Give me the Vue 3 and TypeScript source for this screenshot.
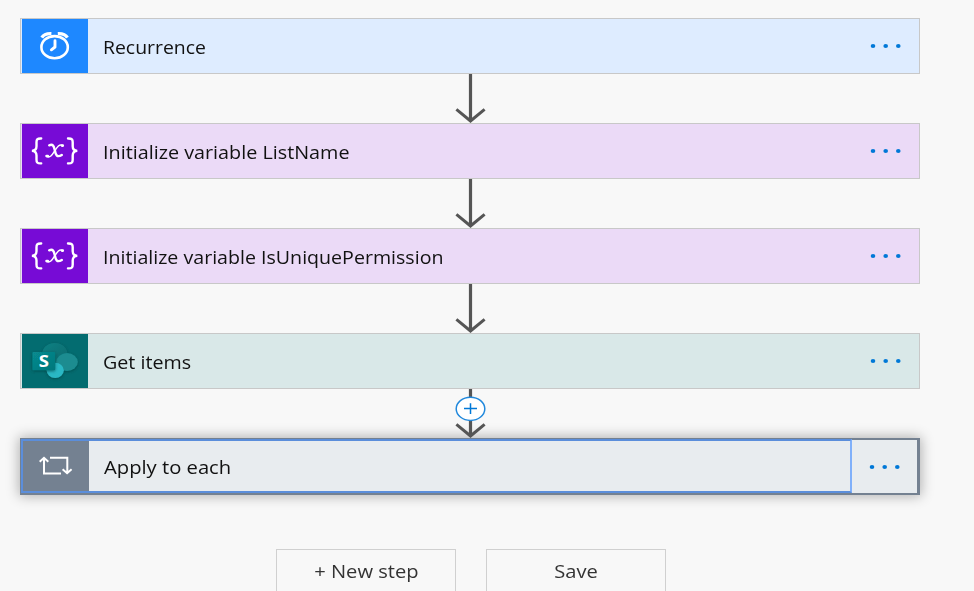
<script setup lang="ts">
type Kind = 'clock' | 'variable' | 'sharepoint' | 'loop'

interface Step {
  label: string
  kind: Kind
  stretch: number
}

const steps: Step[] = [
  { label: 'Recurrence', kind: 'clock', stretch: 1.108 },
  { label: 'Initialize variable ListName', kind: 'variable', stretch: 1.13 },
  { label: 'Initialize variable IsUniquePermission', kind: 'variable', stretch: 1.12 },
  { label: 'Get items', kind: 'sharepoint', stretch: 1.125 },
  { label: 'Apply to each', kind: 'loop', stretch: 1.154 },
]
</script>

<template>
  <main class="designer">
    <div class="flow">
      <template v-for="(step, i) in steps" :key="step.label">
        <section class="card" :class="step.kind">
          <div class="head">
            <div class="tile">
              <svg v-if="step.kind === 'clock'" class="icon" viewBox="0 0 66 54" fill="none" stroke="#fff">
                <ellipse cx="32.6" cy="28.2" rx="13.2" ry="11.1" stroke-width="2.6" />
                <path d="M33 21.8V28L29.4 30.8" stroke-width="2.9" stroke-linecap="round" stroke-linejoin="round" />
                <path d="M19.8 18.6C21.3 16 24.8 14.4 29.4 14.6M45.4 18.6C43.9 16 40.4 14.4 35.8 14.6" stroke-width="3.3" />
              </svg>
              <svg v-else-if="step.kind === 'variable'" class="icon" viewBox="0 0 66 54" fill="none" stroke="#fff" stroke-linecap="round">
                <path d="M19.2 14.5C14.9 14.3 14.5 15.9 14.5 18.2V22.3C14.5 25.1 13.5 26.7 9.9 26.9C13.5 27.1 14.5 28.7 14.5 31.5V35.5C14.5 38 14.9 39.6 19.2 39.4" stroke-width="2.4" />
                <path d="M46 14.5C50.2 14.3 50.7 15.9 50.7 18.2V22.3C50.7 25.1 51.7 26.7 55.3 26.9C51.7 27.1 50.7 28.7 50.7 31.5V35.5C50.7 38 50.2 39.6 46 39.4" stroke-width="2.4" />
                <path d="M27.2 21.3C31 19.7 31.9 22.2 32.7 25.7C33.6 30.5 34.7 34.2 39.8 30.9" stroke-width="2.4" />
                <path d="M41 21.7C37.5 19.3 35 23.2 32.7 26.9C30.2 31.1 27.7 34.6 24.4 32" stroke-width="1.5" />
                <path d="M40 21.6H40.8M24.6 32.1H25.8" stroke-width="2.6" />
              </svg>
              <svg v-else-if="step.kind === 'sharepoint'" class="icon" viewBox="0 0 66 54">
                <defs>
                  <filter id="soft" x="-20%" y="-20%" width="140%" height="150%">
                    <feDropShadow dx="0" dy="1" stdDeviation="1.6" flood-color="#003c40" flood-opacity=".65" />
                  </filter>
                  <linearGradient id="plate" x2="1" y2="1">
                    <stop stop-color="#078b90" />
                    <stop offset="1" stop-color="#04777b" />
                  </linearGradient>
                  <linearGradient id="dome" x2="0.8" y2="1">
                    <stop stop-color="#128184" />
                    <stop offset="1" stop-color="#056a6d" />
                  </linearGradient>
                </defs>
                <g filter="url(#soft)">
                  <ellipse cx="32.8" cy="19.6" rx="12.6" ry="10.6" fill="url(#dome)" />
                  <ellipse cx="45" cy="28" rx="10.8" ry="9" fill="#1b8c90" />
                  <ellipse cx="33.2" cy="36.3" rx="8.6" ry="7.6" fill="#2bb8c4" />
                </g>
                <rect x="10.4" y="18" width="22.8" height="18.2" rx="1" fill="url(#plate)" filter="url(#soft)" />
                <text x="18.2" y="32.6" text-anchor="middle" class="letter">S</text>
              </svg>
              <svg v-else class="icon" viewBox="0 0 66 54" fill="none" stroke="#fff" stroke-width="2">
                <path d="M21 19V34.4H38M16.7 22.7L21 18.8L25.3 22.7M27 18.8H44.3V34M39.6 30.3L44.1 34.2L48.6 30.3" />
              </svg>
            </div>
            <div class="title">
              <span class="text" :style="{ '--stretch': step.stretch }">{{ step.label }}</span>
            </div>
          </div>
          <div class="more">
            <svg width="32" height="6" viewBox="0 0 32 6" fill="#0078d7">
              <ellipse cx="3" cy="3" rx="2.3" ry="1.9" />
              <ellipse cx="15.7" cy="3" rx="2.3" ry="1.9" />
              <ellipse cx="28.3" cy="3" rx="2.3" ry="1.9" />
            </svg>
          </div>
        </section>
        <div v-if="i < steps.length - 1" class="connector">
          <svg width="34" height="49" viewBox="0 0 34 49" fill="none">
            <path d="M17.5 0V47" stroke="#555" stroke-width="3.2" />
            <path d="M3.4 35.4L17.5 47L31.6 35.4" stroke="#555" stroke-width="3" />
            <template v-if="i === 3">
              <ellipse cx="17.5" cy="19.8" rx="14.3" ry="11.6" fill="#fff" stroke="#2088dc" stroke-width="1.5" />
              <path d="M11 19.6H24M17.5 14.3V25" stroke="#0078d7" stroke-width="1.5" />
            </template>
          </svg>
        </div>
      </template>
    </div>
    <div class="actions">
      <button class="action" type="button"><span class="text new">+ New step</span></button>
      <button class="action" type="button"><span class="text save">Save</span></button>
    </div>
  </main>
</template>

<style>
body {
  background: #f8f8f8;
  overflow: hidden;
}
</style>

<style scoped>
.designer {
  box-sizing: border-box;
  height: 591px;
  padding: 18px 0 0 20px;
  overflow: hidden;
  background: #f8f8f8;
  color: #111;
  font: 17.5px/24px "Open Sans", "Noto Sans", sans-serif;
}
.flow {
  width: 900px;
}
.card {
  box-sizing: border-box;
  display: flex;
  height: 56px;
  border: 1px solid #c8c8c8;
}
.head {
  flex: 1;
  display: flex;
}
.tile {
  width: 66px;
  margin-left: 1px;
  flex: none;
}
.icon {
  display: block;
  width: 66px;
  height: 54px;
}
.title {
  flex: 1;
  display: flex;
  align-items: center;
  padding: 1px 0 0 15px;
}
.text {
  display: inline-block;
  white-space: nowrap;
  transform: scaleX(var(--stretch));
  transform-origin: left center;
}
.more {
  display: flex;
  align-items: center;
  width: 49px;
}
.clock { background: #deecff; }
.clock .tile { background: #1e88ff; }
.variable { background: #ebdaf7; }
.variable .tile { background: #770bd6; }
.sharepoint { background: #d9e8e8; }
.sharepoint .tile { background: #036c70; }
.letter {
  fill: #fff;
  font: bold 15.5px "Open Sans", sans-serif;
  transform: scaleX(1.2);
}
.loop {
  height: 57px;
  border: 2px solid #748191;
  border-width: 1px 3px 2px 1px;
  background: #e8ecef;
  box-shadow: 0 0 12px 1px rgba(0, 0, 0, 0.3);
}
.loop .head {
  border: 2px solid #5b8edb;
  border-right-color: #80b0fa;
}
.loop .tile {
  margin-left: 0;
  overflow: hidden;
  background: #748191;
}
.loop .icon {
  margin-top: -2px;
}
.loop .title {
  padding-top: 2px;
}
.loop .more {
  box-sizing: content-box;
  width: 48px;
  padding: 2px 0 0 17px;
  box-shadow: inset 0 1px #748191;
}
.connector {
  display: flex;
  justify-content: center;
  height: 49px;
}
.actions {
  display: flex;
  gap: 30px;
  padding: 54px 0 0 256px;
}
.action {
  box-sizing: border-box;
  width: 180px;
  height: 56px;
  padding: 0 0 12px;
  border: 1px solid #d0d0d0;
  background: #f8f8f8;
  color: #333;
  font: inherit;
}
.new, .save {
  --stretch: 1.15;
  transform-origin: center;
}
</style>
